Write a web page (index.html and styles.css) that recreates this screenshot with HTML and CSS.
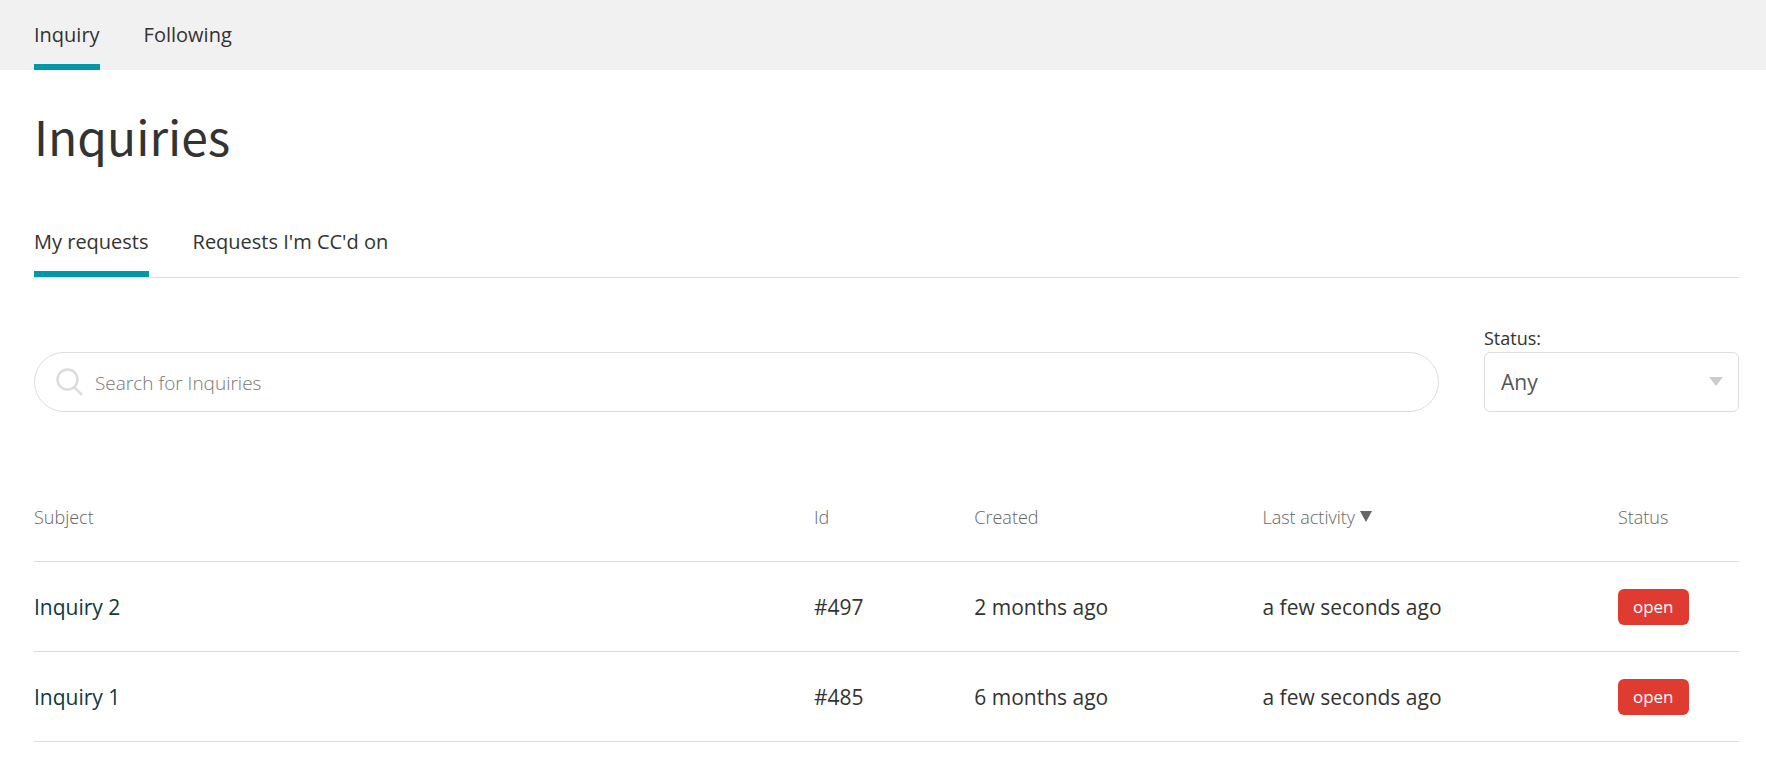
FILE: index.html
```html
<!DOCTYPE html>
<html lang="en">
<head>
  <meta charset="UTF-8" />
  <meta name="viewport" content="width=device-width, initial-scale=1.0"/>
  <title>Inquiries</title>
  <link rel="stylesheet" href="styles.css">
</head>
<body>

  <nav class="top-nav">
    <a href="#" class="tab active">Inquiry</a>
    <a href="#" class="tab">Following</a>
  </nav>

  <main class="container">
    <h1>Inquiries</h1>

    <nav class="sub-nav">
      <a href="#" class="tab active">My requests</a>
      <a href="#" class="tab">Requests I'm CC'd on</a>
    </nav>

    <form class="toolbar">
      <div class="search">
        <svg class="search-icon" viewBox="0 0 27 28" aria-hidden="true">
          <circle cx="11.5" cy="11.5" r="10" />
          <path d="M18.5 19.5L26 27" />
        </svg>
        <input type="search" id="query" placeholder="Search for Inquiries" aria-label="Search for Inquiries">
      </div>
      <div class="filter">
        <label for="status">Status:</label>
        <div class="select-wrap">
          <select id="status">
            <option>Any</option>
          </select>
        </div>
      </div>
    </form>

    <table class="requests">
      <thead>
        <tr>
          <th class="col-subject">Subject</th>
          <th class="col-id">Id</th>
          <th class="col-created">Created</th>
          <th class="col-activity"><a href="#" class="sort">Last activity</a></th>
          <th class="col-status">Status</th>
        </tr>
      </thead>
      <tbody>
        <tr>
          <td><a href="#">Inquiry 2</a></td>
          <td>#497</td>
          <td>2 months ago</td>
          <td>a few seconds ago</td>
          <td><span class="badge">open</span></td>
        </tr>
        <tr>
          <td><a href="#">Inquiry 1</a></td>
          <td>#485</td>
          <td>6 months ago</td>
          <td>a few seconds ago</td>
          <td><span class="badge">open</span></td>
        </tr>
      </tbody>
    </table>
  </main>

</body>
</html>
```
FILE: styles.css
```css
* { box-sizing: border-box; }
body { margin: 0; background: #fff; color: #333; font-family: "Segoe UI", "Open Sans", sans-serif; font-size: 21px; line-height: 30px; }
a { color: inherit; text-decoration: none; }

.top-nav, .sub-nav { display: flex; gap: 44px; }
.top-nav { background: #f1f1f1; padding: 0 27px 0 34px; }
.tab { font-size: 20px; border-bottom: 6px solid transparent; }
.tab.active { border-color: #0097a9; }
.top-nav .tab { padding: 20px 0 14px; }
.sub-nav .tab { padding: 12px 0 14px; }
.sub-nav { border-bottom: 1px solid #ddd; }

.container { padding: 30px 27px 0 34px; }
h1 { margin: 0 0 45px; font-family: "Noto Sans CJK JP", "Open Sans", sans-serif; font-size: 48px; font-weight: 400; line-height: 70px; }

.toolbar { display: flex; align-items: flex-end; gap: 45px; margin: 46px 0 59px; }
.search { flex: 1; display: flex; align-items: center; height: 60px; padding: 0 21px; border: 1px solid #ddd; border-radius: 30px; }
.search-icon { width: 27px; height: 28px; fill: none; stroke: #ddd; stroke-width: 2.5; }
.search input { flex: 1; min-width: 0; margin-left: 12px; padding: 2px 0 0; border: 0; outline: 0; background: none; font: inherit; font-weight: 300; font-size: 19px; color: #333; }
.search input::placeholder { color: #777; }

.filter { flex: 0 0 255px; }
.filter label { display: block; font-size: 18px; line-height: 28px; }
.select-wrap { position: relative; }
.select-wrap::after { content: ""; position: absolute; right: 16px; top: 25px; border: 7px solid transparent; border-top: 9px solid #ccc; border-bottom: 0; pointer-events: none; }
.filter select { display: block; width: 100%; height: 60px; padding: 0 16px; border: 1px solid #ddd; border-radius: 6px; appearance: none; background: #fff; color: #555; font: inherit; }

.requests { width: 100%; table-layout: fixed; border-collapse: collapse; }
.requests th, .requests td { height: 90px; padding: 2px 0 0; text-align: left; border-bottom: 1px solid #ddd; }
.requests th { font-size: 18px; font-weight: 300; color: #666; }
.requests td a { color: #0f3a41; }
.col-subject { width: 45.75%; }
.col-id { width: 9.4%; }
.col-created { width: 16.9%; }
.col-activity { width: 20.85%; }
.col-status { width: 7.1%; }
.sort { display: flex; align-items: center; gap: 5px; }
.sort::after { content: ""; border: 6px solid transparent; border-top: 11px solid #666; border-bottom: 0; }
.badge { display: inline-block; padding: 0 15px; border-radius: 6px; background: #e03b30; color: #fff; font-size: 17px; line-height: 36px; vertical-align: middle; }
```
